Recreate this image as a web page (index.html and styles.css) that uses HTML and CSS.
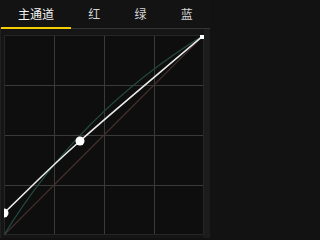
FILE: index.html
```html
<!DOCTYPE html>
<html lang="zh">
<head>
<meta charset="utf-8">
<title>曲线</title>
<link rel="stylesheet" href="styles.css">
</head>
<body>
<div class="widget">
  <div class="tabs">
    <div class="tab active">主通道</div>
    <div class="tab">红</div>
    <div class="tab">绿</div>
    <div class="tab">蓝</div>
  </div>
  <div class="panel">
    <div class="plot">
      <svg class="curves" width="200" height="200" viewBox="0 0 200 200">
        <rect class="bg" x="0" y="0" width="200" height="200"/>
        <g class="grid">
          <line x1="50" y1="0" x2="50" y2="200"/>
          <line x1="100" y1="0" x2="100" y2="200"/>
          <line x1="150" y1="0" x2="150" y2="200"/>
          <line x1="0" y1="50" x2="200" y2="50"/>
          <line x1="0" y1="100" x2="200" y2="100"/>
          <line x1="0" y1="150" x2="200" y2="150"/>
        </g>
        <rect class="frame" x="0.5" y="0.5" width="199" height="199"/>
        <path class="red" d="M0,200 L200,0"/>
        <path class="green" d="M0,200 Q76,76 200,0"/>
        <path class="main" d="M0,178 C25.3,154 42.7,135.3 76,106 C109.3,76.3 158.7,35.3 200,0"/>
        <circle class="knob" cx="0" cy="178" r="4.5"/>
        <circle class="knob" cx="76" cy="106" r="4.5"/>
        <rect class="knob" x="196" y="-4" width="8" height="8"/>
      </svg>
    </div>
    <div class="gutter"></div>
  </div>
</div>
</body>
</html>
```

FILE: styles.css
```css
html, body {
  margin: 0;
  padding: 0;
  background: #121212;
}
.widget {
  width: 210px;
  height: 238px;
  overflow: hidden;
  font-family: "Noto Sans CJK SC", "Noto Sans", sans-serif;
}
.tabs {
  display: flex;
  align-items: flex-start;
  height: 28px;
  padding-left: 1px;
  border-bottom: 1px solid #353535;
  background: #131313;
}
.tab {
  flex: 1 1 auto;
  height: 27px;
  line-height: 27px;
  padding: 0 17px;
  text-align: center;
  font-size: 12px;
  color: #d4d4d4;
  border-bottom: 2px solid transparent;
}
.tab.active {
  color: #f4f4f4;
  border-bottom-color: #f5cd00;
}
.panel {
  display: flex;
  height: 209px;
  background: #151515;
  border-left: 1px solid #202020;
}
.plot {
  padding: 6px 0 3px 3px;
}
.curves {
  display: block;
  overflow: hidden;
}
.gutter {
  width: 6px;
  background: #1c1c1c;
}
.bg {
  fill: #0e0e0e;
}
.grid line {
  stroke: #3a3a3a;
  stroke-width: 1;
  shape-rendering: crispEdges;
}
.frame {
  fill: none;
  stroke: #262626;
  stroke-width: 1;
}
.red {
  fill: none;
  stroke: #4c3232;
  stroke-width: 1.2;
}
.green {
  fill: none;
  stroke: #24493f;
  stroke-width: 1.2;
}
.main {
  fill: none;
  stroke: #ececec;
  stroke-width: 1.6;
}
.knob {
  fill: #ffffff;
}
```
